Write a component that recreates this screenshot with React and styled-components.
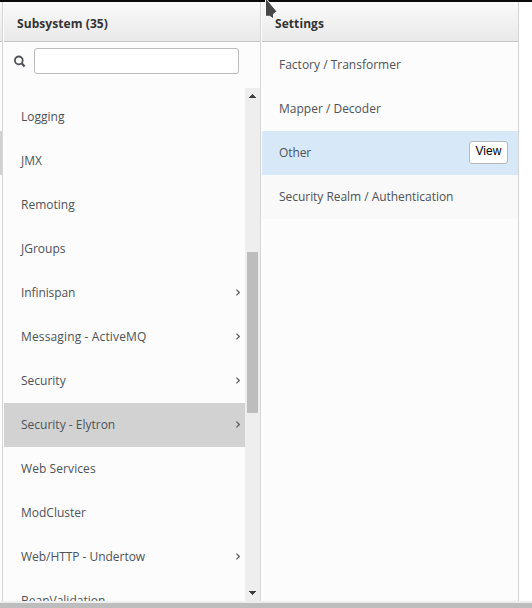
import React from "react";
import styled, { createGlobalStyle } from "styled-components";

const GlobalStyle = createGlobalStyle`
  * { box-sizing: border-box; }
  body {
    margin: 0;
    overflow: hidden;
    background: #fff;
    color: #4d5258;
    font: 12px/20px "Open Sans", sans-serif;
  }
`;

const Page = styled.div`
  display: flex;
  flex-direction: column;
  width: 532px;
  height: 608px;
  overflow: hidden;
`;

const TopBar = styled.div`
  flex: none;
  height: 2px;
  background: #0b090a;
`;

const Columns = styled.main`
  display: flex;
  height: 599px;
`;

const Column = styled.section`
  display: flex;
  flex-direction: column;
  flex: none;
  width: ${(p) => p.$width}px;
  margin-right: 1px;
  background: #fcfcfc;
  border-right: 1px solid #d4d4d4;
`;

const ColumnHeader = styled.header`
  flex: none;
  height: 40px;
  padding: 12px 13px 0;
  border-bottom: 1px solid #c4c4c4;
  background: linear-gradient(#fafafa, #e9e9e9);
  color: #333;
  font-weight: 700;
  letter-spacing: 0.07px;
  white-space: nowrap;
`;

const SliverHeader = styled(ColumnHeader)`
  padding: 0;
`;

const SliverSelection = styled.div`
  height: 44px;
  margin-top: 89px;
  background: #d2d2d2;
`;

const SearchRow = styled.div`
  display: flex;
  align-items: center;
  flex: none;
  height: 46px;
  padding: 0 21px 8px 9px;
`;

const SearchIcon = styled.svg`
  flex: none;
  width: 13px;
  height: 13px;
  margin-right: 8px;
`;

const SearchInput = styled.input`
  width: 205px;
  height: 26px;
  padding: 0 6px;
  border: 1px solid #bbb;
  border-radius: 3px;
  background: #fff;
  font: inherit;
  outline: none;
`;

const ListArea = styled.div`
  display: flex;
  flex: 1;
  min-height: 0;
`;

const List = styled.ul`
  flex: 1;
  min-width: 0;
  margin: 0;
  padding: ${(p) => p.$top}px 0 0;
  overflow: hidden;
  list-style: none;
`;

const rowColors = { selected: "#d2d2d2", active: "#d7e9f9", muted: "#f9f9f9" };

const Row = styled.li`
  display: flex;
  align-items: center;
  justify-content: space-between;
  height: 44px;
  padding: 0 ${(p) => (p.$action ? 10 : 5)}px 0 17px;
  background: ${(p) => rowColors[p.$tone] || "transparent"};
  letter-spacing: ${(p) => p.$tracking || 0}px;
  white-space: nowrap;
`;

const Chevron = styled.svg`
  width: 4px;
  height: 7px;
  margin-top: -1px;
`;

const ViewButton = styled.button`
  width: 39px;
  height: 23px;
  margin-top: -1px;
  padding: 0 0 3px;
  border: 1px solid #b7b7b7;
  border-radius: 3px;
  background: #fff;
  color: #000;
  font: 12px/14px "Liberation Sans", Arial, sans-serif;
  letter-spacing: 0.1px;
`;

const Scrollbar = styled.div`
  display: flex;
  flex-direction: column;
  align-items: center;
  justify-content: space-between;
  flex: none;
  width: 15px;
  padding: 6px 0 6px;
  background: #eee;
`;

const Arrow = styled.svg`
  width: 7px;
  height: 4px;
`;

const Track = styled.div`
  flex: 1;
  width: 11px;
  padding-top: 154px;
`;

const Thumb = styled.div`
  height: 161px;
  background: #bdbdbd;
`;

const BottomScrollbar = styled.div`
  flex: none;
  height: 7px;
  border-top: 2px solid #eee;
  background: #bdbdbd;
`;

const Pointer = styled.svg`
  position: absolute;
  left: 264px;
  top: 0;
  width: 15px;
  height: 21px;
`;

const subsystems = [
  { name: "Logging" },
  { name: "JMX" },
  { name: "Remoting" },
  { name: "JGroups" },
  { name: "Infinispan", nested: true, tracking: -0.1 },
  { name: "Messaging - ActiveMQ", nested: true, tracking: 0.14 },
  { name: "Security", nested: true },
  { name: "Security - Elytron", nested: true, tone: "selected" },
  { name: "Web Services", tracking: 0.08 },
  { name: "ModCluster" },
  { name: "Web/HTTP - Undertow", nested: true, tracking: -0.04 },
  { name: "BeanValidation" },
];

const settings = [
  { name: "Factory / Transformer" },
  { name: "Mapper / Decoder" },
  { name: "Other", tone: "active", action: "View", tracking: -0.1 },
  { name: "Security Realm / Authentication", tone: "muted", tracking: -0.04 },
];

export default function App() {
  return (
    <Page>
      <GlobalStyle />
      <TopBar />
      <Columns>
        <Column $width={3}>
          <SliverHeader />
          <SliverSelection />
        </Column>
        <Column $width={257}>
          <ColumnHeader>Subsystem (35)</ColumnHeader>
          <SearchRow>
            <SearchIcon viewBox="0 0 13 13" fill="none" stroke="#4d5258">
              <circle cx="5.8" cy="5.4" r="3.9" strokeWidth="1.8" />
              <path d="M8.6 8.3 11.6 11.5" strokeWidth="2.3" />
            </SearchIcon>
            <SearchInput aria-label="Filter subsystems" />
          </SearchRow>
          <ListArea>
            <List $top={7}>
              {subsystems.map((s) => (
                <Row key={s.name} $tone={s.tone} $tracking={s.tracking}>
                  {s.name}
                  {s.nested && (
                    <Chevron viewBox="0 0 4 7" fill="none" stroke="#5c5c5c" strokeWidth="1.3">
                      <path d="M.4.6 3.3 3.5 .4 6.4" />
                    </Chevron>
                  )}
                </Row>
              ))}
            </List>
            <Scrollbar>
              <Arrow viewBox="0 0 7 4" fill="#404040" shapeRendering="crispEdges">
                <path d="M3 0h1v1h1v1h1v1h1v1H0V3h1V2h1V1h1z" />
              </Arrow>
              <Track>
                <Thumb />
              </Track>
              <Arrow viewBox="0 0 7 4" fill="#404040" shapeRendering="crispEdges">
                <path d="M0 0h7v1H6v1H5v1H4v1H3V3H2V2H1V1H0z" />
              </Arrow>
            </Scrollbar>
          </ListArea>
        </Column>
        <Column $width={257}>
          <ColumnHeader>Settings</ColumnHeader>
          <List $top={1}>
            {settings.map((s) => (
              <Row
                key={s.name}
                $tone={s.tone}
                $tracking={s.tracking}
                $action={Boolean(s.action)}
              >
                {s.name}
                {s.action && <ViewButton>{s.action}</ViewButton>}
              </Row>
            ))}
          </List>
        </Column>
      </Columns>
      <BottomScrollbar />
      <Pointer viewBox="0 0 15 21">
        <path
          d="M1.5-1v17.3h4.2l3.7 2.7.2-5L13 11.5 2.5-1z"
          fill="#484848"
          stroke="#fff"
          strokeWidth="1"
        />
      </Pointer>
    </Page>
  );
}
